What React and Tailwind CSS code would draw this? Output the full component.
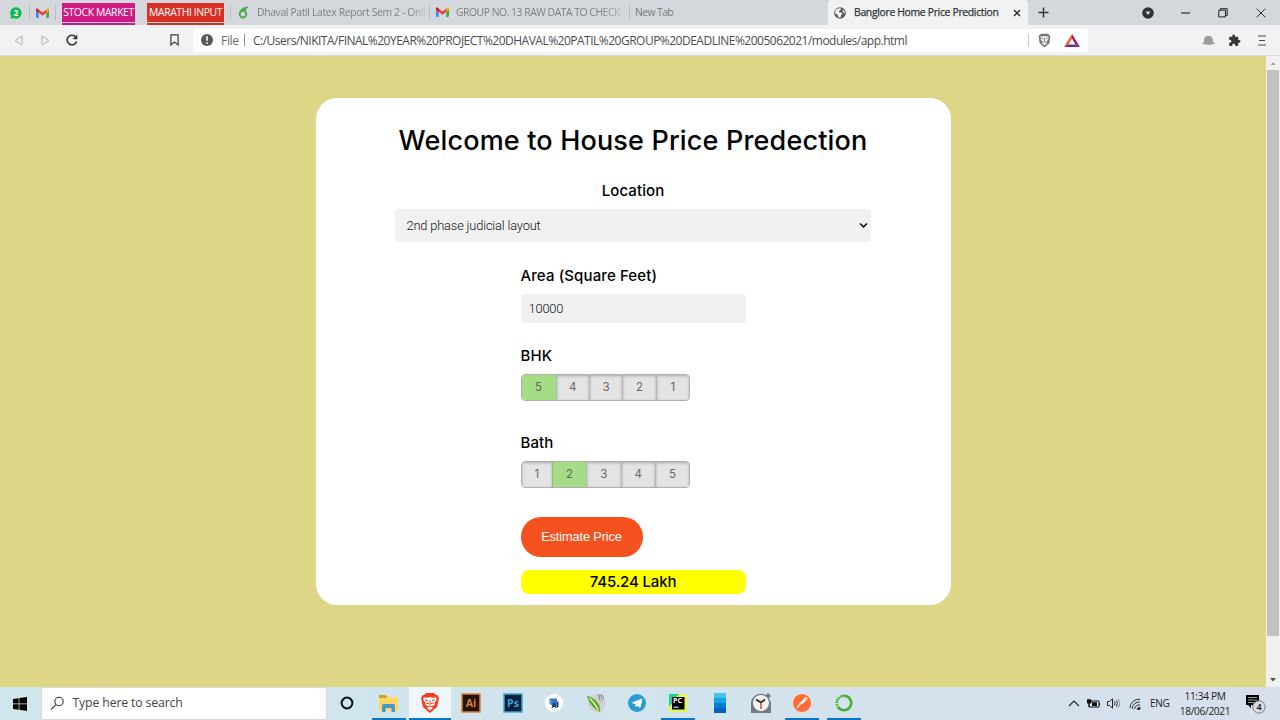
import React from "react";

const ui = "font-['Open_Sans','Noto_Sans',sans-serif]";
const heading = "font-['Inter',sans-serif] font-medium text-black";

function Gmail() {
  return (
    <svg width="13" height="10" viewBox="0 0 24 18" className="shrink-0">
      <path d="M0 2v14q0 2 2 2h3V8L0 3z" fill="#4285f4" />
      <path d="M24 2v14q0 2-2 2h-3V8l5-5z" fill="#34a853" />
      <path d="M0 3q0-3 3-2l9 7 9-7q3-1 3 2v2L12 14 0 5z" fill="#ea4335" />
      <path d="M19 3l2-2q3-1 3 2v2l-5 4z" fill="#fbbc04" />
      <path d="M0 5V3q0-3 3-2l2 2v6z" fill="#c5221f" />
    </svg>
  );
}

function Separator() {
  return <div className="h-[15px] w-px shrink-0 bg-[#babdc0]" />;
}

function TabBar() {
  return (
    <div className={`flex h-[25px] items-center bg-[#d4d8dc] text-[10.4px] whitespace-nowrap text-[#777b7e] ${ui}`}>
      <div className="flex w-[29px] shrink-0 justify-end pr-[7px]">
        <svg width="12" height="12" viewBox="0 0 12 12">
          <path d="M6 .3A5.7 5.7 0 1 1 3.2 11L.3 11.8l.8-2.7A5.7 5.7 0 0 1 6 .3z" fill="#12b84b" />
          <text x="6" y="8.9" textAnchor="middle" fontSize="8" fontWeight="700" fill="#fff" fontFamily="Open Sans">2</text>
        </svg>
      </div>
      <Separator />
      <div className="flex w-[25px] shrink-0 justify-center"><Gmail /></div>
      <Separator />
      <div className="ml-1.5 flex h-full w-[73px] shrink-0 flex-col gap-px pt-[3px] text-center text-white">
        <div className="h-[19px] bg-[#cf1a82] leading-[19px] tracking-[-0.38px]">STOCK MARKET</div>
        <div className="h-[1.5px] bg-[#cf1a82]" />
      </div>
      <div className="ml-3 flex h-full w-[77px] shrink-0 flex-col gap-px pt-[3px] text-center text-white">
        <div className="h-[19px] bg-[#d93025] leading-[19px] tracking-[-0.4px]">MARATHI INPUT</div>
        <div className="h-[1.5px] bg-[#d93025]" />
      </div>
      <div className="ml-1.5"><Separator /></div>
      <div className="flex w-[198px] shrink-0 items-center pl-[7px]">
        <svg width="11" height="13" viewBox="0 0 11 13" className="mr-2 shrink-0" fill="none" stroke="#4ba84a">
          <circle cx="5" cy="8.2" r="3.3" strokeWidth="1.8" />
          <path d="M2 7Q2.5 2.3 9.8 1.2M4.5 5Q6 3.3 8.6 3.4" strokeWidth="1.6" />
        </svg>
        <span className="bg-linear-to-r from-[#777b7e] from-90% to-[#c4c8cb] bg-clip-text tracking-[-0.36px] text-transparent">Dhaval Patil Latex Report Sem 2 - Onli</span>
      </div>
      <Separator />
      <div className="flex w-[199px] shrink-0 items-center gap-[7px] pl-1.5">
        <Gmail />
        <span className="bg-linear-to-r from-[#777b7e] from-88% to-[#b0b4b7] bg-clip-text tracking-[-0.48px] text-transparent">GROUP NO. 13 RAW DATA TO CHECK</span>
      </div>
      <Separator />
      <div className="w-[198px] shrink-0 pl-[5px] tracking-[-0.6px]">New Tab</div>
      <div className="flex h-full w-[200px] shrink-0 items-center rounded-t-[4px] bg-[#f2f2f2] pl-1.5 text-[#303438]">
        <svg width="12" height="12" viewBox="0 0 12 12" className="mr-2 shrink-0">
          <circle cx="6" cy="6" r="5.8" fill="#55595d" />
          <path d="M2 2.8Q3.5 1 6.5 1.2L7 2.5 5 4 5.2 5.3 7.2 5.5 8.3 7 7 8.2 6.6 10.5Q4.4 11 4 9.5L3.8 8 1.2 6.2Q.8 4 2 2.8zM8.6 2.7l1.2.5Q11 5 10.7 6.5L8.8 5.2z" fill="#f2f2f2" />
        </svg>
        <span className="w-[155px] tracking-[-0.32px] [-webkit-text-stroke:0.25px]">Banglore Home Price Prediction</span>
        <svg width="8" height="8" viewBox="0 0 8 8" className="ml-1 shrink-0" stroke="#25292d" strokeWidth="1.4">
          <path d="M1 1l6 6M7 1L1 7" />
        </svg>
      </div>
      <svg width="11" height="11" viewBox="0 0 11 11" className="ml-2.5 shrink-0" stroke="#303438" strokeWidth="1.5">
        <path d="M5.5.5v10M.5 5.5h10" />
      </svg>
      <svg width="12" height="12" viewBox="0 0 12 12" className="ml-[93px] shrink-0">
        <circle cx="6" cy="6" r="5.8" fill="#303236" />
        <path d="M3.5 4.5h5L6 8z" fill="#d9dce0" />
      </svg>
      <svg width="9" height="2" className="ml-[27px] shrink-0"><path d="M0 1h9" stroke="#222" strokeWidth="1.1" /></svg>
      <svg width="10" height="10" viewBox="0 0 10 10" className="ml-[28px] shrink-0" fill="none" stroke="#222">
        <path d="M.8 2.2h6.7v6.7H.8zM2.4 2V.7h6.8v6.8H7.7" />
      </svg>
      <svg width="10" height="10" viewBox="0 0 10 10" className="ml-[28px] shrink-0" stroke="#333">
        <path d="M.7.7l8.6 8.6M9.3.7L.7 9.3" />
      </svg>
    </div>
  );
}

function Toolbar() {
  return (
    <div className={`flex h-[31px] items-center border-b border-[#dcdde2] bg-[#f2f2f3] whitespace-nowrap ${ui}`}>
      <svg width="9" height="11" viewBox="0 0 9 11" className="ml-3.5 shrink-0" fill="none" stroke="#b0b1b3"><path d="M8 1v9L1 5.5z" /></svg>
      <svg width="9" height="11" viewBox="0 0 9 11" className="ml-[18px] shrink-0" fill="none" stroke="#b0b1b3"><path d="M1 1v9l7-4.5z" /></svg>
      <svg width="12" height="12" viewBox="0 0 12 12" className="ml-4 shrink-0">
        <path d="M9.7 2.9A4.8 4.8 0 1 0 10.6 7.4" fill="none" stroke="#303438" strokeWidth="1.6" />
        <path d="M11.3.6v4.6H6.7z" fill="#303438" />
      </svg>
      <svg width="9" height="12" viewBox="0 0 9 12" className="ml-[92px] shrink-0" fill="none" stroke="#3a3d41" strokeWidth="1.2">
        <path d="M.9.8h7.2v10.1L4.5 8.1.9 10.9z" />
      </svg>
      <div className="ml-[14px] flex h-[23px] w-[895px] shrink-0 items-center rounded-[3px] bg-white pl-2 text-[12px] text-[#4a4d50]">
        <svg width="12" height="12" viewBox="0 0 12 12" className="shrink-0">
          <circle cx="6" cy="6" r="6" fill="#54585d" />
          <path d="M6 2.3v4.5M6 8.2v1.6" stroke="#fff" strokeWidth="1.6" />
        </svg>
        <span className="ml-2 w-[23px] pt-px tracking-[-0.3px] text-[#666a6d]">File</span>
        <div className="h-3 w-px bg-[#909396]" />
        <span className="ml-2 w-[775px] pt-px tracking-[-0.505px]">C:/Users/NIKITA/FINAL%20YEAR%20PROJECT%20DHAVAL%20PATIL%20GROUP%20DEADLINE%2005062021/modules/app.html</span>
        <div className="h-[13px] w-px bg-[#c8c8cb]" />
        <svg width="13" height="15" viewBox="0 0 13 15" className="ml-[9px] shrink-0">
          <path d="M3 .7h7l2.3 2.2-.8 7.2-5 4.4-5-4.4L.7 2.9z" fill="#74777b" />
          <path d="M2.5 3l2.2.6L6.5 3l1.8.6 2.2-.6-.4 4-1.8 1.5.5 2-2.3 1.7-2.3-1.7.5-2L2.9 7z" fill="#f4f4f4" />
          <path d="M3 5.2l2.4.7M10 5.2l-2.4.7M6.5 5v4M5 9.5l1.5-.7 1.5.7" stroke="#74777b" fill="none" strokeWidth=".8" />
        </svg>
        <svg width="16" height="13" viewBox="0 0 16 13" className="ml-[13px] shrink-0">
          <path d="M8 0L0 13l4.5-2.5L8 4.4z" fill="#ff5528" />
          <path d="M8 0l8 13-4.5-2.5L8 4.4z" fill="#9e1f63" />
          <path d="M0 13l4.5-2.5h7L16 13z" fill="#662d91" />
        </svg>
      </div>
      <svg width="13" height="11" viewBox="0 0 13 11" className="ml-[114px] shrink-0">
        <path d="M2 6Q2 1 6 1q5-.5 5 5v1q3 1 .8 2L7 10 1 9Q-.5 8 2 7z" fill="#9b9b9d" />
      </svg>
      <svg width="13" height="13" viewBox="0 0 24 24" className="ml-[13px] shrink-0" fill="#363a3e">
        <path d="M20.5 11H19V7a2 2 0 0 0-2-2h-4V3.5a2.5 2.5 0 0 0-5 0V5H4a2 2 0 0 0-2 2v3.8h1.5a2.7 2.7 0 0 1 0 5.4H2V20a2 2 0 0 0 2 2h3.8v-1.5a2.7 2.7 0 0 1 5.4 0V22H17a2 2 0 0 0 2-2v-4h1.5a2.5 2.5 0 0 0 0-5z" />
      </svg>
      <svg width="8" height="11" viewBox="0 0 8 11" className="ml-[17px] shrink-0" stroke="#44484b" strokeWidth="1.2">
        <path d="M0 1h8M1 5.5h6M0 10h8" />
      </svg>
    </div>
  );
}

function Label({ children }) {
  return <div className={`h-6 text-[15px] leading-[25px] tracking-[0.11px] ${heading}`}>{children}</div>;
}

function Switch({ items, selected, first }) {
  return (
    <div className="flex h-[27px] w-[169.5px] overflow-hidden rounded-[4px] border border-[#b0b0b0] font-['Inter',sans-serif] text-[11.5px] text-[#666]">
      {items.map((n, i) => (
        <div
          key={n}
          className={`flex items-center justify-center ${i ? "flex-1 border-l" : first} ${
            n === selected
              ? "border-[#90bd77] bg-[#a5dc86]"
              : "border-[#b6b6b6] bg-[#e4e4e4] shadow-[inset_0_1px_3px_rgba(0,0,0,0.25)]"
          }`}
        >
          {n}
        </div>
      ))}
    </div>
  );
}

function Page() {
  return (
    <div className="flex h-[631px]">
      <main className="flex w-[1266px] flex-col items-center bg-[#ddd686] pt-[42px]">
        <div className="flex h-[507px] w-[635px] flex-col items-center rounded-[21px] bg-white pt-[23px]">
          <h1 className={`h-10 text-[27px] leading-10 tracking-[0.17px] whitespace-nowrap ${heading}`}>Welcome to House Price Predection</h1>
          <div className="mt-[17px]"><Label>Location</Label></div>
          <div className="mt-[7px] flex h-[33px] w-[476px] items-center justify-between rounded-[4px] bg-[#f1f1f1] pr-[3px] pl-[11.5px] font-['Roboto',sans-serif] text-[12.8px] font-light text-[#111]">
            <span className="tracking-[-0.15px]">2nd phase judicial layout</span>
            <svg width="9" height="7" viewBox="0 0 9 7" fill="none" stroke="#111" strokeWidth="1.6"><path d="M1 1.5l3.5 3.3L8 1.5" /></svg>
          </div>
          <div className="mt-[21px] flex w-[225px] flex-col items-start">
            <Label>Area (Square Feet)</Label>
            <div className="mt-[7px] flex h-[28.5px] w-full items-center rounded-[4px] bg-[#f1f1f1] pl-2 font-['Roboto',sans-serif] text-[12.8px] font-light tracking-[-0.15px] text-[#111]">10000</div>
            <div className="mt-[20.5px] tracking-[0.4px]"><Label>BHK</Label></div>
            <div className="mt-[7px]"><Switch items={[5, 4, 3, 2, 1]} selected={5} first="w-[34px]" /></div>
            <div className="mt-[29px]"><Label>Bath</Label></div>
            <div className="mt-[7px]"><Switch items={[1, 2, 3, 4, 5]} selected={2} first="w-[30.5px]" /></div>
            <button className="mt-[29px] h-10 w-[122px] rounded-full bg-[#f4511e] font-['Liberation_Sans',sans-serif] text-[12.8px] tracking-[-0.13px] text-white">Estimate Price</button>
            <div className={`mt-[13px] h-6 w-full rounded-[8px] bg-[#ffff00] text-center text-[15px] leading-6 tracking-[-0.15px] ${heading}`}>745.24 Lakh</div>
          </div>
        </div>
      </main>
      <div className="flex w-[14px] flex-col items-center bg-[#f1f1f1]">
        <svg width="14" height="14" viewBox="0 0 14 14"><path d="M4.5 9L7 6l2.5 3z" fill="#a3a3a3" /></svg>
        <div className="h-[566px] w-3 bg-[#c1c1c1]" />
        <div className="flex-1" />
        <svg width="14" height="14" viewBox="0 0 14 14"><path d="M4 5h6L7 8.5z" fill="#505050" /></svg>
      </div>
    </div>
  );
}

function Adobe({ label, color, bg }) {
  return (
    <svg width="20" height="20" viewBox="0 0 20 20">
      <rect x="1" y="1" width="18" height="18" fill={bg} stroke={color} strokeWidth="1.5" />
      <text x="10" y="13.5" textAnchor="middle" fontSize="10.5" fontWeight="700" fontFamily="Open Sans" fill={color}>{label}</text>
    </svg>
  );
}

function TaskItem({ children, running, active }) {
  return (
    <div className={`flex h-full w-[41.4px] shrink-0 flex-col items-center ${active ? "bg-[#eff6fa]" : ""}`}>
      <div className="flex h-[31px] items-center justify-center pt-px">{children}</div>
      {running && <div className={`h-0.5 bg-[#0a75c9] ${active ? "w-full" : "w-[34px]"}`} />}
    </div>
  );
}

function Taskbar() {
  return (
    <div className={`flex h-[33px] items-center bg-linear-to-r from-[#cfe6ed] via-[#d2e4ee] to-[#d8dfec] ${ui}`}>
      <div className="flex w-[40.5px] shrink-0 justify-center">
        <svg width="14" height="14" viewBox="0 0 14 14" fill="#000"><path d="M0 2l5.7-.8v5.4H0zM6.4 1.1L14 0v6.6H6.4zM0 7.3h5.7v5.4L0 11.9zM6.4 7.3H14V14l-7.6-1.2z" /></svg>
      </div>
      <div className="flex h-[33px] w-[286px] shrink-0 items-center border border-[#d5dadd] bg-white pl-2 text-[12.3px] text-[#454545]">
        <svg width="15" height="15" viewBox="0 0 15 15" className="mr-2" fill="none" stroke="#333" strokeWidth="1.1"><circle cx="9" cy="5.5" r="4.2" /><path d="M6 8.7L1 13.7" /></svg>
        <span className="tracking-[-0.16px]">Type here to search</span>
      </div>
      <div className="flex h-full items-center">
        <TaskItem><svg width="14" height="14"><circle cx="7" cy="7" r="5.4" fill="none" stroke="#0a0f12" strokeWidth="2" /></svg></TaskItem>
        <TaskItem running>
          <svg width="19" height="17" viewBox="0 0 19 17">
            <path d="M0 1q0-1 1-1h6l2 2h9q1 0 1 1v12q0 1-1 1H1q-1 0-1-1z" fill="#ffd765" />
            <path d="M0 1q0-1 1-1h6l1.5 2-1 1H0z" fill="#d7a31c" />
            <path d="M3 17v-6q0-2 2-2h9q2 0 2 2v6h-3.5v-4h-6v4z" fill="#4397ca" />
          </svg>
        </TaskItem>
        <TaskItem running active>
          <svg width="18" height="20" viewBox="0 0 18 20">
            <path d="M5 0h8l2 2 2 .5 1 3-2 8.5L9 20l-7-6L0 5.5l1-3L3 2z" fill="#f43d1e" />
            <path d="M3 4.2l3 .5L9 4l3 .7 3-.5 1 2-2.5 4 .2 1.5-3 1.5 1.2 2L9 17.3l-2.9-2.1 1.2-2-3-1.5.2-1.5L2 6.2z" fill="#fff" />
            <path d="M4 7l3 .7M14 7l-3 .7M9 7v5M5 10l3 .5M13 10l-3 .5M7 14l2-1 2 1" fill="none" stroke="#f43d1e" strokeWidth="1" />
          </svg>
        </TaskItem>
        <TaskItem><Adobe label="Ai" color="#d98334" bg="#26120a" /></TaskItem>
        <TaskItem><Adobe label="Ps" color="#3aa6dc" bg="#09203b" /></TaskItem>
        <TaskItem>
          <svg width="18" height="18" viewBox="0 0 18 18">
            <circle cx="9" cy="9" r="9" fill="#fff" />
            <path d="M4.5 4.5H12V12H7.5l-3-2.5z" fill="#3776d6" /><path d="M4.5 4.5l2 3-1.5 3z" fill="#3ddc84" />
            <text x="9.2" y="13.5" textAnchor="middle" fontSize="7.5" fontWeight="700" fontFamily="Open Sans" fill="#073042">A</text>
            <path d="M12.7 7.5v6" stroke="#073042" strokeWidth="1.3" />
          </svg>
        </TaskItem>
        <TaskItem>
          <svg width="20" height="20" viewBox="0 0 20 20">
            <circle cx="10.5" cy="10" r="9" fill="#d0d3d3" />
            <path d="M1 3q6 1 10 6t3 10Q4 14 1 3z" fill="#58a91b" />
            <path d="M3.5 5q5 5 9 12" stroke="#eef6df" strokeWidth="1.4" fill="none" />
            <path d="M12 1.5q6-1 6 4L15 10q-3-4-3-8.5z" fill="#8f9496" /><path d="M14 1.5l1 8M17 3l-2 6.5" stroke="#eee" strokeWidth=".7" />
          </svg>
        </TaskItem>
        <TaskItem>
          <svg width="18" height="18" viewBox="0 0 18 18"><circle cx="9" cy="9" r="9" fill="#289dd4" /><path d="M3.5 8.8l10.2-4q.8-.1.6.8L12.6 13q-.3 1-1.1.5L9 11.6l-1.3 1.6-.6-3z" fill="#fff" /><path d="M7.1 10.2L12.3 6.6 8 10.8l-.3 2.4z" fill="#b4d7e9" /></svg>
        </TaskItem>
        <TaskItem running>
          <svg width="18" height="18" viewBox="0 0 18 18">
            <path d="M0 0h18v18H0z" fill="#e9f354" /><path d="M0 0h10L0 13z" fill="#22d38b" />
            <path d="M3 3h12.5v12.5H3z" fill="#000" />
            <text x="4" y="9.4" fontSize="7" fontWeight="700" fontFamily="Open Sans" fill="#fff">PC</text>
            <path d="M4.5 13.2h5" stroke="#fff" strokeWidth="1" />
          </svg>
        </TaskItem>
        <TaskItem>
          <svg width="12" height="20" viewBox="0 0 12 20"><path d="M0 0h12v20H0z" fill="#0763b5" /><path d="M0 0h12v15H0z" fill="#087bd0" /><path d="M0 0h12v10H0z" fill="#16a3e4" /><path d="M0 0h12v5H0z" fill="#41c4f0" /></svg>
        </TaskItem>
        <TaskItem>
          <svg width="20" height="20" viewBox="0 0 20 20">
            <path d="M0 10a10 10 0 0 1 15-8l2-2 3 3-2 2 2 5v10H0z" fill="#72797f" />
            <circle cx="10" cy="10" r="8" fill="#f3f3f3" />
            <path d="M5 6.5L10 9.5l4-3" fill="none" stroke="#222" strokeWidth="1.7" /><path d="M10 9.5V16" stroke="#d83b20" strokeWidth="1.4" />
          </svg>
        </TaskItem>
        <TaskItem running>
          <svg width="20" height="20" viewBox="0 0 20 20"><circle cx="10" cy="10" r="9.5" fill="#ff6c37" stroke="#fff" strokeWidth=".7" /><path d="M5 15l3-4 4-4" fill="none" stroke="#ffe5d8" strokeWidth="1.6" /><path d="M8.5 10l3.5-4 2 1.5-3.5 3.5z" fill="#fff" /><circle cx="14" cy="5.3" r="1.6" fill="#ffe5d8" /></svg>
        </TaskItem>
        <TaskItem running>
          <svg width="18" height="18" viewBox="0 0 18 18" fill="none" stroke="#43b02a"><path d="M9 1.8a7.2 7.2 0 1 1-6 11.2" strokeWidth="2.6" /><path d="M9 1.8A7.2 7.2 0 0 0 3 13" strokeWidth="2.5" strokeDasharray="1.6 .8" /></svg>
        </TaskItem>
      </div>
      <div className="flex-1" />
      <svg width="12" height="7" viewBox="0 0 12 7" className="mr-[7px]" fill="none" stroke="#222" strokeWidth="1.1"><path d="M1 6l5-5 5 5" /></svg>
      <svg width="13" height="9" viewBox="0 0 13 9" className="mr-[7px]"><path d="M3 2h9v6H2V4" fill="#e0e8f0" stroke="#111" /><path d="M5 3.2h5V7H5z" fill="#111" /><path d="M0 1h4v3H0zM1 0v1M3 0v1M2 4v4" fill="#111" stroke="#111" /><path d="M12.5 4v2" stroke="#111" /></svg>
      <svg width="14" height="11" viewBox="0 0 14 11" className="mr-2" fill="none" stroke="#222"><path d="M.5 3.5h2l3-2.7v9.4l-3-2.7h-2zM7.4 3.7q1.2 1.8 0 3.6M9.4 2.4q2 3.1 0 6.2" /><path d="M11.4 1.2q3 4.3 0 8.6" stroke="#8b929c" /></svg>
      <svg width="12" height="12" viewBox="0 0 12 12" className="mr-[9px]" fill="none" stroke="#333"><path d="M1 10A9 9 0 0 1 11 1.2M3.2 10.8A7 7 0 0 1 11 4M5.6 11A5 5 0 0 1 11 7" /><path d="M8 11.3a3 3 0 0 1 3-2v2z" fill="#222" /></svg>
      <span className="w-[19px] text-[10px] tracking-[-0.3px] text-[#222]">ENG</span>
      <div className="ml-2 w-[56px] text-center text-[10.2px] leading-[15px] tracking-[-0.34px] whitespace-nowrap text-[#222]">
        <div>11:34 PM</div>
        <div>18/06/2021</div>
      </div>
      <svg width="21" height="21" viewBox="0 0 21 21" className="mr-[14px] ml-3">
        <path d="M1 2h13v10H6v3l-3-3H1z" fill="#050505" /><path d="M3 4.5h9M3 7h9M3 9.5h6" stroke="#bfc4ca" strokeWidth=".8" />
        <circle cx="14" cy="14" r="6.2" fill="#d9dce4" stroke="#777d86" strokeWidth="1" />
        <text x="14" y="17.3" textAnchor="middle" fontSize="9" fontWeight="600" fontFamily="Open Sans" fill="#111">4</text>
      </svg>
    </div>
  );
}

export default function App() {
  return (
    <div className="h-[720px] w-[1280px] overflow-hidden bg-white">
      <TabBar />
      <Toolbar />
      <Page />
      <Taskbar />
    </div>
  );
}
